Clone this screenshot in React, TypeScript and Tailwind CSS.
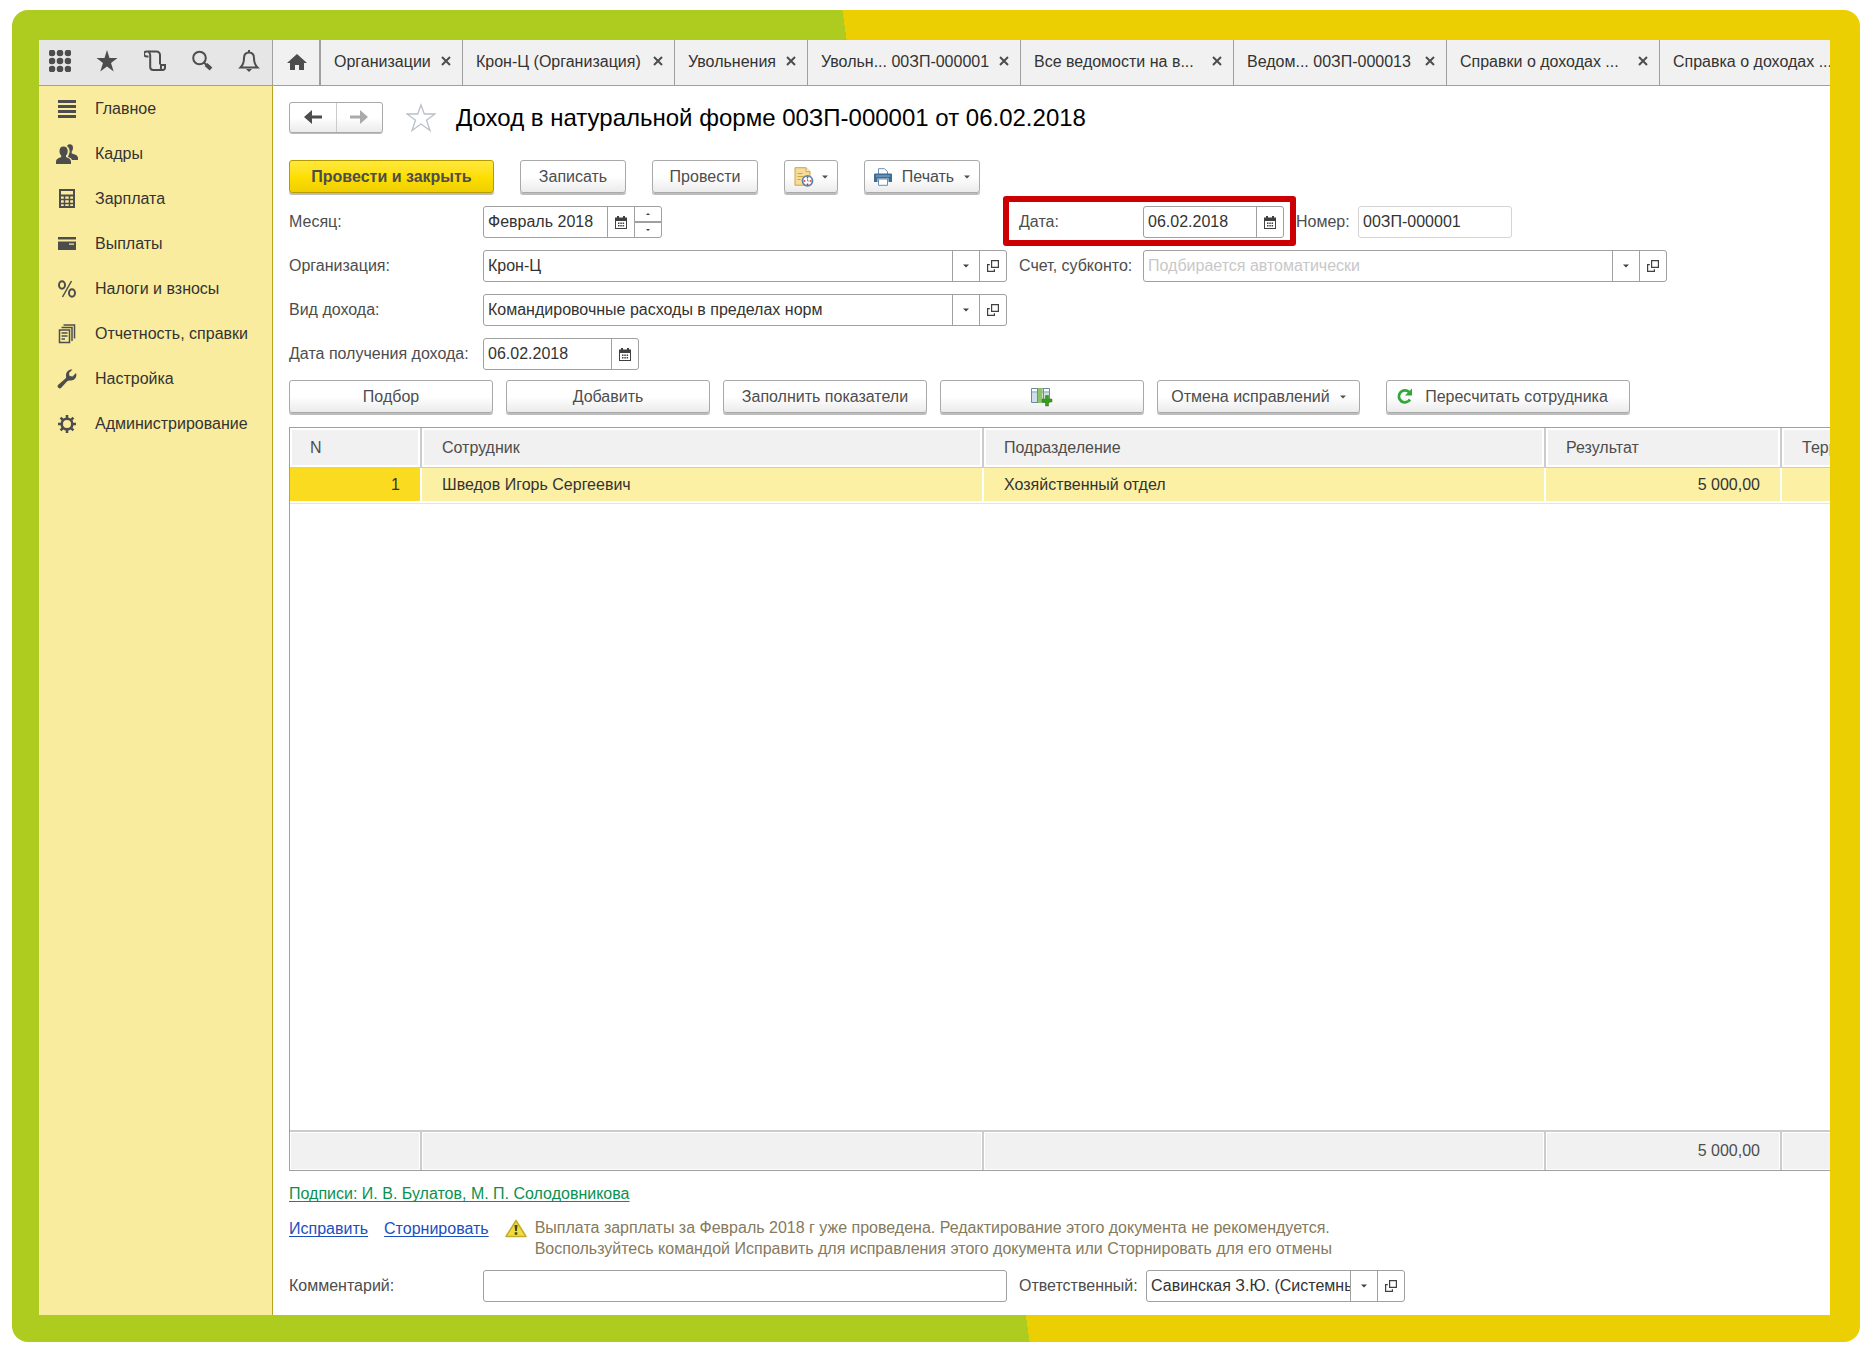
import type { ReactNode } from 'react';
import { clsx } from 'clsx';

const tabs = [
  { title: 'Организации', width: 'w-[142px]' },
  { title: 'Крон-Ц (Организация)', width: 'w-[212px]' },
  { title: 'Увольнения', width: 'w-[133px]' },
  { title: 'Увольн... 00ЗП-000001', width: 'w-[213px]' },
  { title: 'Все ведомости на в...', width: 'w-[213px]' },
  { title: 'Ведом... 00ЗП-000013', width: 'w-[213px]' },
  { title: 'Справки о доходах ...', width: 'w-[213px]' },
  { title: 'Справка о доходах ...', width: 'w-[213px]' },
];

const sections = [
  { title: 'Главное', icon: <MenuIcon /> },
  { title: 'Кадры', icon: <PeopleIcon /> },
  { title: 'Зарплата', icon: <CalculatorIcon /> },
  { title: 'Выплаты', icon: <CardIcon /> },
  { title: 'Налоги и взносы', icon: <PercentIcon /> },
  { title: 'Отчетность, справки', icon: <ReportsIcon /> },
  { title: 'Настройка', icon: <WrenchIcon /> },
  { title: 'Администрирование', icon: <GearIcon /> },
];

/* Icons */

function GridIcon() {
  return (
    <svg width="22" height="22" viewBox="0 0 22 22" fill="currentColor">
      {[3, 11, 19].map((y) => [3, 11, 19].map((x) => <circle key={`${x}-${y}`} cx={x} cy={y} r="3.3" />))}
    </svg>
  );
}

function StarIcon() {
  return (
    <svg width="22" height="22" viewBox="0 0 22 22" fill="currentColor">
      <path d="M11 0l2.500 8H21.500l-6.500 5 2.700 8.500L11 16.500l-6.700 5L7 13 .5 8h8z" />
    </svg>
  );
}

function ScrollIcon() {
  return (
    <svg width="22" height="22" viewBox="0 0 22 22" fill="none" stroke="currentColor" strokeWidth="2">
      <path d="M4.500 6.500H2.500a2 2 0 0 1 0-5h10a3.500 3.500 0 0 1 3.500 3.500v9.500" />
      <path d="M4.500 1.800c1.200.7 1.700 1.700 1.700 3.200v12a3 3 0 0 0 3 3h9.500a2.300 2.300 0 0 0 2.300-2.500V15h-4v2.500c0 1.500-.5 2.500-1.500 2.500" />
    </svg>
  );
}

function SearchIcon() {
  return (
    <svg width="22" height="22" viewBox="0 0 22 22" fill="none" stroke="currentColor">
      <circle cx="8.500" cy="8" r="6.300" strokeWidth="2" />
      <path d="M13 12.500l2.500 2.500" strokeWidth="2" />
      <path d="M15 14.500l5 4.500" strokeWidth="4" />
    </svg>
  );
}

function BellIcon() {
  return (
    <svg width="22" height="22" viewBox="0 0 22 22" fill="none" stroke="currentColor" strokeWidth="2">
      <path d="M11 2.500c-3.500 0-5 2.500-5 5.500 0 5-1 7-3.500 9.500h17C17 15 16 13 16 8c0-3-1.500-5.500-5-5.500z" />
      <path d="M11 0v3" />
      <path d="M8 19h6l-3 3z" fill="currentColor" stroke="none" />
    </svg>
  );
}

function HomeIcon() {
  return (
    <svg width="20" height="18" viewBox="0 0 20 18" fill="currentColor">
      <path d="M10 1L0 10h3v7h5v-5h4v5h5v-7h3z" />
    </svg>
  );
}

function CloseIcon() {
  return (
    <svg width="10" height="10" viewBox="0 0 10 10" fill="none" stroke="currentColor" strokeWidth="2">
      <path d="M1 1l8 8M9 1L1 9" />
    </svg>
  );
}

function MenuIcon() {
  return (
    <svg width="20" height="20" viewBox="0 0 20 20" fill="currentColor">
      <path d="M1 1h18v3H1zM1 6h18v3H1zM1 11h18v3H1zM1 16h18v3H1z" />
    </svg>
  );
}

function PeopleIcon() {
  return (
    <svg width="22" height="20" viewBox="0 0 22 20" fill="currentColor">
      <path d="M11 2c1-2.500 6-2.500 6 1.500 0 2-.5 3-1.300 4v2c3 1 6.300 1.500 6.300 4.500v2h-6c-.5-2-2.500-2.500-4-3l1-3c1-1.500 1.300-5.500-2-8z" />
      <path d="M7.500 2.500c-3 0-4 2-4 4.500 0 2 .7 3.500 1.700 4.500v1.500C2.500 14 0 15 0 18v2h15v-2c0-3-2.500-4-5-5v-1.500c1-1 1.700-2.500 1.700-4.500 0-2.500-1.200-4.500-4.200-4.500z" />
    </svg>
  );
}

function CalculatorIcon() {
  return (
    <svg width="16" height="20" viewBox="0 0 16 20" fill="none" stroke="currentColor">
      <path d="M1 1h14v17H1z" strokeWidth="2" />
      <path d="M1 6.500h14" strokeWidth="2" />
      <path d="M1 10.500h14M1 14.500h14M5.500 7v11M10.500 7v11" strokeWidth="1.500" />
    </svg>
  );
}

function CardIcon() {
  return (
    <svg width="20" height="14" viewBox="0 0 20 14" fill="currentColor">
      <path d="M1 0h18v2.500H1z" />
      <path fillRule="evenodd" d="M1 4.500h18V13H1zM12 6.500h5v1.200h-5z" />
    </svg>
  );
}

function PercentIcon() {
  return (
    <svg width="20" height="18" viewBox="0 0 20 18" fill="none" stroke="currentColor" strokeWidth="2">
      <ellipse cx="5" cy="5" rx="3" ry="3.800" />
      <ellipse cx="15" cy="13" rx="3" ry="3.800" />
      <path d="M14.500 1L5.500 17" strokeWidth="1.500" />
    </svg>
  );
}

function ReportsIcon() {
  return (
    <svg width="18" height="20" viewBox="0 0 18 20" fill="none" stroke="currentColor" strokeWidth="1.500">
      <path d="M5.500 1h11v13.500M3.500 3.500H14v13.500" />
      <path d="M1.500 6h10v12.500h-10z" />
      <path d="M3.500 9h6M3.500 12h6M3.500 15h3.500" />
    </svg>
  );
}

function WrenchIcon() {
  return (
    <svg width="20" height="20" viewBox="0 0 20 20" fill="currentColor">
      <path d="M15.500.5L12 4l.5 3 3 .5L19 4c1.500 4-1.500 8-5.500 7.500-1.500 0-2.500 0-3.500 1L4 19c-1.500 1.500-4.500-1-3-3l7.500-6.500c1-1 .5-2 .5-3C9 2.500 12 0 15.500.5z" />
    </svg>
  );
}

function GearIcon() {
  return (
    <svg width="20" height="20" viewBox="0 0 20 20" fill="none" stroke="currentColor">
      <circle cx="10" cy="10" r="5.300" strokeWidth="2.600" />
      <path d="M10 1v3M10 16v3M1 10h3M16 10h3M3.600 3.600l2.200 2.200M14.200 14.200l2.200 2.200M3.600 16.400l2.200-2.200M14.200 5.800l2.200-2.200" strokeWidth="2.600" />
    </svg>
  );
}

function ArrowIcon({ className }: { className?: string }) {
  return (
    <svg width="18" height="14" viewBox="0 0 18 14" fill="currentColor" className={className}>
      <path d="M0 7l8-7v5.500h10v3H8V14z" />
    </svg>
  );
}

function FavoriteIcon() {
  return (
    <svg width="30" height="29" viewBox="0 0 30 29" fill="none" stroke="#b9c0c8" strokeWidth="1.300">
      <path d="M15 2l3.300 9H29l-8.500 6.300 3.500 10.200-9-6.500-9 6.500 3.500-10.200L1 11h10.700z" />
    </svg>
  );
}

function CaretIcon() {
  return (
    <svg width="6" height="4" viewBox="0 0 6 4" fill="currentColor">
      <path d="M0 .5h6l-3 3z" />
    </svg>
  );
}

function SpinIcon({ up = false }: { up?: boolean }) {
  return (
    <svg width="4" height="2" viewBox="0 0 4 2" fill="currentColor" className={clsx(up && 'rotate-180')}>
      <path d="M0 0h4L2 2z" />
    </svg>
  );
}

function CalendarIcon() {
  return (
    <svg width="12" height="13" viewBox="0 0 12 13" fill="currentColor">
      <path d="M2 0h2v2H2zM8 0h2v2H8z" />
      <path fillRule="evenodd" d="M0 1.500h12V13H0zM1 5v7h10V5z" />
      <path d="M3 6.500h1.500V8H3zM5.300 6.500h1.500V8H5.300zM7.600 6.500h1.500V8H7.600zM3 9h1.500v1.500H3zM5.300 9h1.500v1.500H5.300zM7.600 9h1.500v1.500H7.600z" />
    </svg>
  );
}

function OpenIcon() {
  return (
    <svg width="12" height="12" viewBox="0 0 12 12" fill="none" stroke="currentColor" strokeWidth="1.200">
      <path d="M4.600.6h6.800v6.800H4.600z" />
      <path d="M2.800 4.600H.6v6.800h6.800V9.200" />
    </svg>
  );
}

function DocumentClockIcon() {
  return (
    <svg width="20" height="20" viewBox="0 0 20 20">
      <path d="M1 .7h11l4 4v13.500H1z" fill="#f5dc98" stroke="#cfa347" />
      <path d="M12 .7v4h4" fill="#fff3c9" stroke="#cfa347" />
      <path d="M3.500 6.500h5M3.500 9.500h6M3.500 12.500h3" stroke="#cfa347" />
      <circle cx="13.500" cy="13.800" r="5" fill="#fff" stroke="#5b85ac" strokeWidth="1.800" />
      <path d="M13.500 11.500v2.500h1.500" fill="none" stroke="#7a94ad" />
      <path d="M12.800 10.500h1.500M12.800 17.200h1.500M9.800 14h1.500M15.800 14h1.500" stroke="#e02020" strokeWidth="1.600" />
    </svg>
  );
}

function PrinterIcon() {
  return (
    <svg width="18" height="18" viewBox="0 0 18 18">
      <path d="M4.500 6V.7h6l3 3V6" fill="#fff" stroke="#6c8fae" />
      <path d="M1 5.500h16a1 1 0 0 1 1 1V14h-3.500v-3.500h-11V14H0V6.500a1 1 0 0 1 1-1z" fill="#3d6d97" />
      <path d="M2 8h14" stroke="#8fb2cf" />
      <path d="M4.500 11h9v6.300h-9z" fill="#fff" stroke="#6c8fae" />
    </svg>
  );
}

function AddColumnIcon() {
  return (
    <svg width="22" height="20" viewBox="0 0 22 20">
      <path d="M.5 1.500h18v14H.5z" fill="#fff" stroke="#6a8ba6" />
      <path d="M1 6h5v9H1z" fill="#cfdfea" />
      <path d="M12 6h6v9h-6z" fill="#cfdfea" />
      <path d="M.5 5h18M6.500 1.500v14M12.500 1.500v14" stroke="#6a8ba6" />
      <path d="M7 1h4.500v15H7z" fill="#8cc36a" />
      <path d="M14.500 8.500h3v3.500H21v3h-3.500v4h-3v-4H11v-3h3.500z" fill="#39a015" stroke="#2b7d10" strokeWidth=".5" />
    </svg>
  );
}

function RefreshIcon() {
  return (
    <svg width="17" height="17" viewBox="0 0 17 17">
      <path d="M14 11.500A6 6 0 1 1 13 4" fill="none" stroke="#2ea836" strokeWidth="2.800" />
      <path d="M16 .5v7H9z" fill="#2ea836" />
    </svg>
  );
}

function WarningIcon() {
  return (
    <svg width="22" height="19" viewBox="0 0 22 19">
      <path d="M11 1.500L21 17.500H1z" fill="#f3dc3a" stroke="#c2ae2c" strokeWidth="1.500" strokeLinejoin="round" />
      <path d="M9.500 6h3l-.6 6h-1.800zM9.700 13.300h2.600v2.400H9.700z" fill="#4a4420" />
    </svg>
  );
}

/* Controls */

type ButtonProps = {
  children: ReactNode;
  className?: string;
  label?: string;
  primary?: boolean;
};

function Button({ children, className, label, primary }: ButtonProps) {
  return (
    <button
      type="button"
      aria-label={label}
      className={clsx(
        'flex h-[33px] shrink-0 items-center justify-center rounded-[3px] border whitespace-nowrap text-[#4d4d4d] shadow-[0_2px_0_#bdbdbd]',
        primary
          ? 'border-[#b39b00] bg-linear-to-b from-[#ffe838] via-[#fddf00] to-[#efcf00] font-bold'
          : 'border-[#a9a9a9] bg-linear-to-b from-white from-50% to-[#ebebeb]',
        className,
      )}
    >
      {children}
    </button>
  );
}

function Addon({ label, children }: { label: string; children: ReactNode }) {
  return (
    <button
      type="button"
      aria-label={label}
      className="flex w-[27px] shrink-0 items-center justify-center border-l border-[#a0a0a0] text-[#404040]"
    >
      {children}
    </button>
  );
}

type FieldProps = {
  id: string;
  label: string;
  labelWidth?: string;
  width: string;
  value?: string;
  placeholder?: string;
  muted?: boolean;
  children?: ReactNode;
};

function Field({ id, label, labelWidth, width, value, placeholder, muted, children }: FieldProps) {
  return (
    <div className="flex h-8 items-center">
      <label htmlFor={id} className={clsx('shrink-0 whitespace-nowrap text-[#4d4d4d]', labelWidth)}>
        {label}
      </label>
      <div
        className={clsx(
          'flex h-8 overflow-hidden rounded-[3px] border bg-white',
          muted ? 'border-[#d4d4d4]' : 'border-[#a0a0a0]',
          width,
        )}
      >
        <input
          id={id}
          type="text"
          defaultValue={value}
          placeholder={placeholder}
          className="min-w-0 flex-1 pl-1 text-[#333] outline-none placeholder:text-[#c8c8c8]"
        />
        {children}
      </div>
    </div>
  );
}

function ReferenceAddons() {
  return (
    <>
      <Addon label="Выбрать из списка">
        <CaretIcon />
      </Addon>
      <Addon label="Открыть">
        <OpenIcon />
      </Addon>
    </>
  );
}

function CalendarAddon() {
  return (
    <Addon label="Календарь">
      <CalendarIcon />
    </Addon>
  );
}

function Columns() {
  return (
    <colgroup>
      <col className="w-[132px]" />
      <col className="w-[562px]" />
      <col className="w-[562px]" />
      <col className="w-[236px]" />
      <col className="w-[160px]" />
    </colgroup>
  );
}

const headCell =
  'border-r-2 border-b border-[#ccc] bg-[#f1f1f1] px-5 text-left font-normal whitespace-nowrap text-[#4d4d4d] shadow-[inset_0_0_0_2px_#fff]';
const bodyCell = 'border-r-2 border-white px-5 bg-[#fcf0a4]';
const footCell = 'border-r-2 border-[#ccc] bg-[#f1f1f1] px-5 text-right shadow-[inset_0_0_0_1px_#fff]';
const link = 'underline underline-offset-2 [text-decoration-skip-ink:none]';

function TopBar() {
  return (
    <header className="flex h-[46px] shrink-0 border-b border-[#a0a0a0] bg-[#f1f1f1]">
      <div className="flex w-[234px] shrink-0 items-center justify-between border-r border-[#a0a0a0] bg-[#e6e6e6] pr-3 pb-1 pl-2.5 text-[#4d4d4d]">
        <button type="button" aria-label="Функции"><GridIcon /></button>
        <button type="button" aria-label="Избранное"><StarIcon /></button>
        <button type="button" aria-label="История"><ScrollIcon /></button>
        <button type="button" aria-label="Поиск"><SearchIcon /></button>
        <button type="button" aria-label="Оповещения"><BellIcon /></button>
      </div>
      <nav className="flex min-w-0 flex-1 overflow-hidden">
        <button
          type="button"
          aria-label="Начальная страница"
          className="flex w-12 shrink-0 items-center justify-center border-r-2 border-[#a0a0a0] pb-0.5 pl-0.5 text-[#4d4d4d]"
        >
          <HomeIcon />
        </button>
        {tabs.map((tab) => (
          <div
            key={tab.title}
            className={clsx('flex shrink-0 items-center justify-between border-r border-[#a0a0a0] pr-[11px] pb-0.5 pl-[13px]', tab.width)}
          >
            <a href="#" className="whitespace-nowrap text-[#333]">{tab.title}</a>
            <button type="button" aria-label="Закрыть" className="pb-0.5 text-[#4d4d4d]"><CloseIcon /></button>
          </div>
        ))}
      </nav>
    </header>
  );
}

function Sidebar() {
  return (
    <nav className="w-[234px] shrink-0 border-r border-[#b8a21f] bg-[#faec9e]">
      {sections.map((section) => (
        <a key={section.title} href="#" className="flex h-[45px] items-center text-[#333]">
          <span className="flex w-14 justify-center text-[#4d4d4d]">{section.icon}</span>
          {section.title}
        </a>
      ))}
    </nav>
  );
}

export default function App() {
  return (
    <div className="flex min-h-screen bg-white pt-2.5 pr-3.5 pb-[15px] pl-3 font-['Liberation_Sans',Arial,sans-serif] text-base">
      <div className="flex min-w-0 flex-1 rounded-2xl bg-[linear-gradient(82deg,#aecb1f_50%,#eccf03_50%)] pt-[30px] pr-[30px] pb-[27px] pl-[27px]">
        <div className="flex min-w-0 flex-1 flex-col overflow-hidden bg-white">
          <TopBar />
          <div className="flex min-h-0 flex-1">
            <Sidebar />
            <main className="flex min-w-0 flex-1 flex-col overflow-hidden pt-[15px] pb-[13px] pl-4">
              {/* Title */}
              <div className="flex h-8 items-center">
                <div className="flex h-[31px] w-[94px] shrink-0 rounded-[3px] border border-[#a9a9a9] bg-linear-to-b from-white from-50% to-[#ebebeb] shadow-[0_1px_0_#bdbdbd]">
                  <button
                    type="button"
                    aria-label="Назад"
                    className="flex flex-1 items-center justify-center border-r border-[#ccc] text-[#4d4d4d]"
                  >
                    <ArrowIcon />
                  </button>
                  <button type="button" aria-label="Вперед" className="flex flex-1 items-center justify-center text-[#aaa]">
                    <ArrowIcon className="rotate-180" />
                  </button>
                </div>
                <button type="button" aria-label="В избранное" className="mr-5 ml-[23px] shrink-0"><FavoriteIcon /></button>
                <h1 className="pt-0.5 text-2xl whitespace-nowrap text-black">Доход в натуральной форме 00ЗП-000001 от 06.02.2018</h1>
              </div>

              {/* Document commands */}
              <div className="mt-[27px] flex gap-[26px]">
                <Button primary className="w-[205px]">Провести и закрыть</Button>
                <Button className="w-[106px]">Записать</Button>
                <Button className="w-[106px]">Провести</Button>
                <Button className="w-[54px] gap-2" label="Создать на основании">
                  <DocumentClockIcon />
                  <CaretIcon />
                </Button>
                <Button className="w-[116px] gap-2.5">
                  <PrinterIcon />
                  Печать
                  <CaretIcon />
                </Button>
              </div>

              {/* Document fields */}
              <div className="mt-[13px] flex gap-3">
                <div className="flex flex-col gap-3">
                  <Field id="month" label="Месяц:" labelWidth="w-[194px]" width="w-[179px]" value="Февраль 2018">
                    <CalendarAddon />
                    <div className="flex w-[27px] shrink-0 flex-col border-l border-[#a0a0a0] text-[#404040]">
                      <button type="button" aria-label="Следующий месяц" className="flex flex-1 items-center justify-center border-b-2 border-[#a0a0a0]">
                        <SpinIcon up />
                      </button>
                      <button type="button" aria-label="Предыдущий месяц" className="flex flex-1 items-center justify-center">
                        <SpinIcon />
                      </button>
                    </div>
                  </Field>
                  <Field id="organization" label="Организация:" labelWidth="w-[194px]" width="w-[524px]" value="Крон-Ц">
                    <ReferenceAddons />
                  </Field>
                  <Field
                    id="income-kind"
                    label="Вид дохода:"
                    labelWidth="w-[194px]"
                    width="w-[524px]"
                    value="Командировочные расходы в пределах норм"
                  >
                    <ReferenceAddons />
                  </Field>
                  <Field id="income-date" label="Дата получения дохода:" labelWidth="w-[194px]" width="w-[156px]" value="06.02.2018">
                    <CalendarAddon />
                  </Field>
                </div>
                <div className="flex flex-col gap-3">
                  <div className="flex gap-3">
                    <div className="relative">
                      <Field id="date" label="Дата:" labelWidth="w-[124px]" width="w-[141px]" value="06.02.2018">
                        <CalendarAddon />
                      </Field>
                      <div className="pointer-events-none absolute -top-2.5 -right-3 -bottom-2 -left-4 rounded-[3px] border-[6px] border-[#cc0003]" />
                    </div>
                    <Field id="number" label="Номер:" labelWidth="w-[62px]" width="w-[154px]" value="00ЗП-000001" muted />
                  </div>
                  <Field
                    id="account"
                    label="Счет, субконто:"
                    labelWidth="w-[124px]"
                    width="w-[524px]"
                    placeholder="Подбирается автоматически"
                  >
                    <ReferenceAddons />
                  </Field>
                </div>
              </div>

              {/* Table commands */}
              <div className="mt-2.5 flex gap-[13px]">
                <Button className="w-[204px]">Подбор</Button>
                <Button className="w-[204px]">Добавить</Button>
                <Button className="w-[204px]">Заполнить показатели</Button>
                <Button className="w-[204px]" label="Добавить колонку">
                  <AddColumnIcon />
                </Button>
                <Button className="w-[203px] gap-2.5">
                  Отмена исправлений
                  <CaretIcon />
                </Button>
                <Button className="ml-[13px] w-[244px] gap-3 pr-3">
                  <RefreshIcon />
                  Пересчитать сотрудника
                </Button>
              </div>

              {/* Employees */}
              <div className="mt-3.5 flex flex-1 flex-col overflow-hidden border border-r-0 border-[#a0a0a0]">
                <table className="w-[1652px] table-fixed border-separate border-spacing-0">
                  <Columns />
                  <thead>
                    <tr className="h-10">
                      <th className={headCell}>N</th>
                      <th className={headCell}>Сотрудник</th>
                      <th className={headCell}>Подразделение</th>
                      <th className={headCell}>Результат</th>
                      <th className={headCell}>Территория</th>
                    </tr>
                  </thead>
                  <tbody>
                    <tr className="h-[33px] text-[#333]">
                      <td className="border-r-2 border-white bg-[#fadb20] px-5 text-right">1</td>
                      <td className={bodyCell}>Шведов Игорь Сергеевич</td>
                      <td className={bodyCell}>Хозяйственный отдел</td>
                      <td className={clsx(bodyCell, 'text-right')}>5 000,00</td>
                      <td className={bodyCell} />
                    </tr>
                  </tbody>
                </table>
                <div className="mt-0.5 flex-1 border-t border-[#e4e4e4]" />
                <table className="w-[1652px] table-fixed border-separate border-spacing-0 border-t-2 border-[#ccc]">
                  <Columns />
                  <tbody>
                    <tr className="h-[38px] text-[#4d4d4d]">
                      <td className={footCell} />
                      <td className={footCell} />
                      <td className={footCell} />
                      <td className={footCell}>5 000,00</td>
                      <td className={footCell} />
                    </tr>
                  </tbody>
                </table>
              </div>

              {/* Signatures and warning */}
              <div className="mt-[11px] leading-6">
                <a href="#" className={clsx(link, 'text-[#0a9150]')}>Подписи: И. В. Булатов, М. П. Солодовникова</a>
              </div>
              <div className="mt-[11px] flex leading-6">
                <a href="#" className={clsx(link, 'text-[#1a4fc0]')}>Исправить</a>
                <a href="#" className={clsx(link, 'ml-4 text-[#1a4fc0]')}>Сторнировать</a>
                <span className="mt-0.5 mr-2 ml-4"><WarningIcon /></span>
                <p className="leading-[21px] whitespace-nowrap text-[#857a5e]">
                  Выплата зарплаты за Февраль 2018 г уже проведена. Редактирование этого документа не рекомендуется.
                  <br />
                  Воспользуйтесь командой Исправить для исправления этого документа или Сторнировать для его отмены
                </p>
              </div>

              <div className="mt-[11px] flex gap-3">
                <Field id="comment" label="Комментарий:" labelWidth="w-[194px]" width="w-[524px]" />
                <Field
                  id="responsible"
                  label="Ответственный:"
                  labelWidth="w-[127px]"
                  width="w-[259px]"
                  value="Савинская З.Ю. (Системный программист)"
                >
                  <ReferenceAddons />
                </Field>
              </div>
            </main>
          </div>
        </div>
      </div>
    </div>
  );
}
